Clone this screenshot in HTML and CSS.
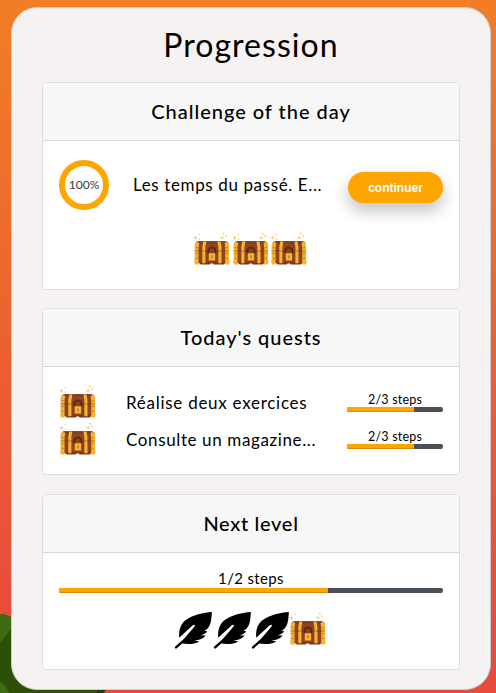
FILE: index.html
```
<!DOCTYPE html>
<html lang="fr">
<head>
<meta charset="utf-8">
<title>Progression</title>
<link rel="stylesheet" href="styles.css">
</head>
<body>
<svg class="bush" viewBox="0 0 110 80" aria-hidden="true">
  <path d="M0 1C7 1 12 4 17 9C40 24 83 49 105 78L103 80H0Z" fill="#2d5009"/>
  <path d="M0 1C7 1 12 4 17 9L0 30ZM0 68Q6 73 9 80H0Z" fill="#3f6b14"/>
  <path d="M98 77L106 77L103 80H96Z" fill="#203c04"/>
</svg>
<svg class="defs" aria-hidden="true">
  <symbol id="chest" viewBox="0 0 38.4 38.4">
    <g transform="translate(-.3 -.8)">
    <path d="M2.2 15Q2.5 11 6 11H32.4Q36 11 36.2 15V33H2.2Z" fill="#91451c"/>
    <path d="M6 32H33L31 34.2H21L20 33H18L17 34.2H8Z" fill="#7b3515"/>
    <path d="M5 11H33.2L34.2 13H4.2Z" fill="#7b3b20"/>
    <path d="M2 15Q2.2 12 5.4 11.7L6.5 13Q5.8 16 5.8 20V31L6.2 34.3H2.2L1.4 31L2 30ZM36.4 15Q36.2 12 33 11.7L31.9 13Q32.6 16 32.6 20V31L32.2 34.3H36.2L37 31L36.4 30Z" fill="#f9b42f"/>
    <path d="M10.5 11.3H13.7L12.7 17V33H9.6V17ZM24.7 11.3H27.9L28.8 17V33H25.7V17Z" fill="#f3b238"/>
    <path d="M2 20.2H36.4V21.2H2Z" fill="#693017" opacity=".45"/>
    <path d="M15.6 23V20.8A3.6 3.6 0 0 1 22.8 20.8V23" fill="none" stroke="#5b2915" stroke-width="2"/>
    <path d="M16.1 23H22.4V30.2H16.1Z" fill="#f9b42f"/>
    <path d="M18.8 25.2H19.8V28H18.8Z" fill="#a75b1b"/>
    <path d="M3.5 17H4.5V18H3.5ZM3.5 22.7H4.5V23.7H3.5ZM3.5 27.5H4.5V28.5H3.5ZM33.9 17H34.9V18H33.9ZM33.9 22.7H34.9V23.7H33.9ZM33.9 27.5H34.9V28.5H33.9Z" fill="#72401b"/>
    <path d="M2.8 5.2L3.4 7L5.2 7.6L3.4 8.2L2.8 10L2.2 8.2L.4 7.6L2.2 7ZM29.4 5.2L30 7L31.8 7.6L30 8.2L29.4 10L28.8 8.2L27 7.6L28.8 7ZM6.6 3.3L7.5 4.2L6.6 5.1L5.7 4.2ZM6.9 8L7.8 8.9L6.9 9.8L6 8.9ZM31 2.2L32.2 3.4L31 4.6L29.8 3.4ZM33.4 4.8L34.5 5.9L33.4 7L32.3 5.9Z" fill="#fac76b"/>
    </g>
  </symbol>
  <symbol id="feather" viewBox="0 0 38.4 38.4">
    <path d="M37.9.9C30 1.7 18.4 3.6 11.4 9.3C5.8 13.8 4.8 20.2 5.2 26.8L18.8 14.2Q20.8 13 21 14.7Q20.9 15.4 9.5 28.2L1.3 35.5Q.3 36.7 1.2 37.4Q2.1 38 3.2 37L8.1 32.5C14 33.3 21 33.2 25.3 30.4L20.4 29.6C25.6 29.2 29.7 27.5 31.6 24.5L26.1 24.2Q31.4 23.2 33.2 20.2L30.4 19.8C34.5 18 36.7 14 37.4 7Z" fill="#000"/>
  </symbol>
</svg>
<main class="panel">
  <h1 class="title">Progression</h1>
  <section class="card card-challenge">
    <h2 class="card-header h-challenge">Challenge of the day</h2>
    <div class="card-body">
      <div class="challenge">
        <div class="ring">100%</div>
        <span class="name n-challenge">Les temps du passé. E...</span>
        <button class="button">continuer</button>
      </div>
      <div class="rewards">
        <svg class="icon"><use href="#chest"/></svg><svg class="icon"><use href="#chest"/></svg><svg class="icon"><use href="#chest"/></svg>
      </div>
    </div>
  </section>
  <section class="card card-quests">
    <h2 class="card-header h-quests">Today's quests</h2>
    <div class="card-body">
      <div class="quest">
        <svg class="icon"><use href="#chest"/></svg>
        <span class="name n-first">Réalise deux exercices</span>
        <div class="progress"><span class="steps">2/3 steps</span><div class="track"><div class="fill" style="width:70%"></div></div></div>
      </div>
      <div class="quest">
        <svg class="icon"><use href="#chest"/></svg>
        <span class="name n-second">Consulte un magazine...</span>
        <div class="progress"><span class="steps">2/3 steps</span><div class="track"><div class="fill" style="width:70%"></div></div></div>
      </div>
    </div>
  </section>
  <section class="card card-level">
    <h2 class="card-header h-level">Next level</h2>
    <div class="card-body">
      <div class="progress level"><span class="steps">1/2 steps</span><div class="track"><div class="fill" style="width:70%"></div></div></div>
      <div class="rewards">
        <svg class="icon"><use href="#feather"/></svg><svg class="icon"><use href="#feather"/></svg><svg class="icon"><use href="#feather"/></svg><svg class="icon"><use href="#chest"/></svg>
      </div>
    </div>
  </section>
</main>
</body>
</html>
```
FILE: styles.css
```
* { box-sizing: border-box; }
body {
  margin: 0;
  height: 693px;
  overflow: hidden;
  padding: 7px 5px 3px 11px;
  background: linear-gradient(#f17e27, #ec6a2e 35%, #e84b3c 90%);
  font-family: Lato, "Liberation Sans", sans-serif;
  color: #000;
}
.bush { position: absolute; left: 0; top: 613px; width: 110px; height: 80px; }
.defs { position: absolute; width: 0; height: 0; }
.panel {
  position: relative;
  height: 683px;
  padding: 0 30px;
  border: 1px solid #ccc;
  border-radius: 26px;
  background: #f6f2f1;
}
.title {
  margin: 0;
  height: 74px;
  line-height: 74px;
  text-align: center;
  font-size: 32px;
  font-weight: 400;
  letter-spacing: 1.05px;
  white-space: nowrap;
}
.card {
  width: 418px;
  border: 1px solid #dedede;
  border-radius: 4px;
  background: #fff;
}
.card-challenge { height: 208px; margin-bottom: 18px; }
.card-quests { height: 167px; margin-bottom: 19px; }
.card-level { height: 176px; }
.card-header {
  margin: 0;
  height: 58px;
  line-height: 56px;
  border-bottom: 1px solid #d8d8d8;
  border-radius: 3px 3px 0 0;
  background: #f7f7f7;
  text-align: center;
  font-size: 20px;
  font-weight: 500;
  letter-spacing: .97px;
  white-space: nowrap;
}
.h-level { letter-spacing: .68px; }
.card-body { padding: 0 16px; }
.challenge { display: flex; align-items: flex-start; height: 90px; padding-top: 19px; }
.ring {
  width: 50px;
  height: 50px;
  margin-right: 24px;
  border: 6px solid orange;
  border-radius: 50%;
  line-height: 38px;
  text-align: center;
  font-size: 12px;
  color: #343a40;
  display: flex;
  justify-content: center;
}
.name { white-space: nowrap; font-size: 17px; }
.n-challenge { line-height: 50px; letter-spacing: .62px; }
.n-first { letter-spacing: .73px; }
.n-second { letter-spacing: .62px; }
.button {
  margin: 12px 0 0 auto;
  width: 95px;
  height: 31px;
  padding: 0;
  border: 0;
  border-radius: 16px;
  background: orange;
  box-shadow: 0 8px 16px rgba(0, 0, 0, .2), 0 6px 20px rgba(0, 0, 0, .06);
  color: #fff;
  font: bold 12px "Liberation Sans", sans-serif;
}
.rewards { display: flex; justify-content: center; }
.icon { display: block; flex: none; width: 38.4px; height: 38.4px; }
.card-quests .card-body { padding-top: 17px; }
.quest { display: grid; grid-template-columns: 67px 1fr 96px; height: 37px; }
.quest .name { line-height: 38px; }
.quest .progress { padding-top: 8px; }
.steps { display: block; height: 15px; line-height: 16px; text-align: center; font-size: 12.5px; letter-spacing: .2px; }
.track { height: 5px; border-radius: 2px; overflow: hidden; background: #495057; }
.fill { height: 5px; background: orange; border-bottom: 1px solid #d98c00; }
.level { padding-top: 17px; margin-bottom: 18px; }
.level .steps { height: 18px; line-height: 17px; font-size: 15px; letter-spacing: .35px; }
```
